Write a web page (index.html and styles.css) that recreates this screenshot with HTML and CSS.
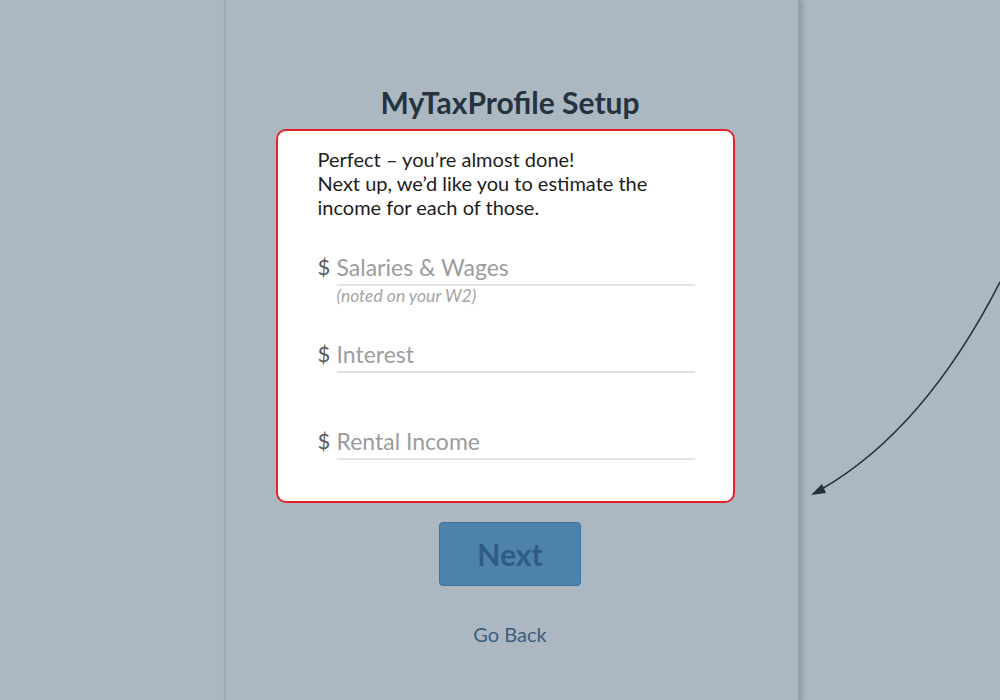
FILE: index.html
```html
<!DOCTYPE html>
<html>
<head>
<meta charset="utf-8">
<link rel="stylesheet" href="styles.css">
</head>
<body>
<div class="stage">
  <div class="panel">
    <h1 class="title">MyTaxProfile Setup</h1>
    <div class="card">
      <p class="intro">Perfect – you’re almost done!<br>Next up, we’d like you to estimate the<br>income for each of those.</p>
      <div class="field">
        <span class="cur">$</span>
        <div class="input-wrap">
          <div class="input">Salaries &amp; Wages</div>
          <div class="hint">(noted on your W2)</div>
        </div>
      </div>
      <div class="field">
        <span class="cur">$</span>
        <div class="input-wrap">
          <div class="input">Interest</div>
        </div>
      </div>
      <div class="field">
        <span class="cur">$</span>
        <div class="input-wrap">
          <div class="input">Rental Income</div>
        </div>
      </div>
    </div>
    <button class="next">Next</button>
    <a class="back">Go Back</a>
  </div>
  <svg class="arrow" width="1000" height="700" viewBox="0 0 1000 700">
    <path d="M1000 282 C 950 380, 890 450, 820 490" fill="none" stroke="#22313d" stroke-width="1.6"/>
    <polygon points="811,495 822,484 826,493" fill="#22313d"/>
  </svg>
</div>
</body>
</html>
```

FILE: styles.css
```css
html, body {
  margin: 0;
  padding: 0;
  background: #abb8c2;
  font-family: Lato, "Open Sans", sans-serif;
}
.stage {
  width: 1000px;
  height: 700px;
  position: relative;
  overflow: hidden;
}
.panel {
  margin-left: 224px;
  width: 576px;
  height: 700px;
  border-left: 2px solid #9eabb6;
  border-right: 2px solid #93a1ac;
  box-shadow: 3px 0 4px rgba(60, 80, 95, 0.25);
  display: flex;
  flex-direction: column;
  align-items: center;
  box-sizing: border-box;
}
.title {
  margin: 83px 0 0 0;
  font-size: 30px;
  font-weight: 700;
  color: #25333f;
  line-height: 38px;
  position: relative;
  left: -2px;
}
.card {
  margin-top: 8px;
  width: 459px;
  height: 374px;
  box-sizing: border-box;
  background: #fff;
  border: 2px solid #e3222c;
  border-radius: 10px;
  padding: 16px 38px 0 40px;
  position: relative;
  left: -7px;
}
.intro {
  margin: 0;
  font-size: 20px;
  line-height: 24px;
  color: #1d1d1d;
}
.field {
  display: flex;
  align-items: flex-start;
  height: 87px;
}
.intro + .field {
  margin-top: 33px;
}
.cur {
  font-size: 22px;
  color: #5a5a5a;
  width: 19px;
  line-height: 30px;
}
.input-wrap {
  flex: 1;
}
.input {
  font-size: 23px;
  line-height: 30px;
  color: #9c9c9c;
  border-bottom: 2px solid #e2e2e2;
  padding-bottom: 2px;
}
.hint {
  font-size: 17.5px;
  font-style: italic;
  color: #a5a5a5;
  line-height: 20px;
}
.next {
  margin-top: 19px;
  width: 142px;
  height: 64px;
  background: #4d82aa;
  border: 1px solid #3c71a0;
  border-radius: 4px;
  font-family: Lato, sans-serif;
  font-size: 30px;
  font-weight: 700;
  color: #2e5c85;
  padding: 0;
  position: relative;
  left: -2px;
}
.back {
  margin-top: 36px;
  font-size: 20px;
  color: #3b5e7f;
  position: relative;
  left: -2px;
}
.arrow {
  position: absolute;
  left: 0;
  top: 0;
  pointer-events: none;
}
```
